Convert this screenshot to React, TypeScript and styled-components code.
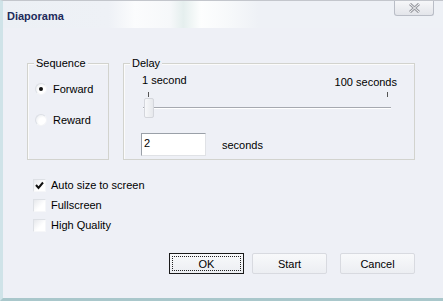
import styled, { createGlobalStyle } from "styled-components";

const GlobalStyle = createGlobalStyle`
  html, body {
    margin: 0;
    padding: 0;
    background: #eef0f6;
  }
  body {
    font-family: "Liberation Sans", Arial, sans-serif;
    font-size: 11px;
    color: #000;
  }
`;

const Window = styled.div`
  position: relative;
  width: 443px;
  height: 301px;
  box-sizing: border-box;
  background: #eef0f6;
  border-top: 1px solid #c3c6cc;
  border-left: 3px solid #cfe3e8;
  border-bottom: 3px solid #a9c7cb;
  display: flex;
  flex-direction: column;
  overflow: hidden;
`;

const TitleBar = styled.div`
  height: 27px;
  display: flex;
  align-items: flex-start;
  justify-content: space-between;
  background: linear-gradient(
    90deg,
    #ecf0f5 0%,
    #eef1f6 24%,
    #fbfcfd 30%,
    #f6f8fa 38%,
    #e5efee 41%,
    #fdfefe 45%,
    #f6f8fa 52%,
    #eef1f6 58%,
    #eef1f6 100%
  );
`;

const Title = styled.span`
  margin: 8px 0 0 4px;
  font-weight: bold;
  font-size: 11px;
  line-height: 14px;
  color: #1d2b5b;
`;

const CloseButton = styled.div`
  width: 40px;
  height: 15px;
  margin-right: 9px;
  box-sizing: border-box;
  border: 1px solid #b9bdc6;
  border-top: none;
  border-radius: 0 0 3px 3px;
  background: linear-gradient(#f6f7f9, #e3e5ea);
  display: flex;
  align-items: center;
  justify-content: center;
`;

const Body = styled.div`
  flex: 1;
  display: flex;
  flex-direction: column;
  padding: 35px 28px 0 24px;
`;

const GroupRow = styled.div`
  display: flex;
  gap: 14px;
`;

const GroupBox = styled.div<{ $width: number }>`
  width: ${({ $width }) => $width}px;
  height: 97px;
  box-sizing: border-box;
  border: 1px solid #d2d3ce;
  box-shadow: inset 1px 1px 0 #fbfbfb;
`;

const GroupLabel = styled.span`
  display: block;
  width: fit-content;
  margin: -7px 0 0 6px;
  padding: 0 2px;
  line-height: 13px;
  background: #eef0f6;
`;

const RadioList = styled.div`
  display: flex;
  flex-direction: column;
  gap: 15px;
  margin: 11px 0 0 7px;
`;

const OptionRow = styled.label`
  display: flex;
  align-items: center;
  height: 16px;
  gap: 6px;
`;

const Radio = styled.span<{ $checked?: boolean }>`
  width: 12px;
  height: 12px;
  border-radius: 50%;
  box-sizing: border-box;
  border: 1px solid #dcdfe5;
  border-right-color: #f4f5f7;
  border-bottom-color: #f4f5f7;
  background: radial-gradient(circle at 65% 65%, #ffffff 40%, #e4e7eb 100%);
  display: flex;
  align-items: center;
  justify-content: center;

  &::after {
    content: "";
    width: 4px;
    height: 4px;
    border-radius: 50%;
    background: ${({ $checked }) => ($checked ? "#111" : "transparent")};
  }
`;

const RangeLabels = styled.div`
  display: flex;
  justify-content: space-between;
  align-items: flex-start;
  margin: 4px 17px 0 18px;
  line-height: 13px;
`;

const RightLabel = styled.span`
  margin-top: 2px;
`;

const Slider = styled.div`
  position: relative;
  width: 248px;
  height: 29px;
  margin: 2px 0 0 19px;
`;

const Tick = styled.span<{ $left: number }>`
  position: absolute;
  left: ${({ $left }) => $left}px;
  top: 1px;
  width: 1px;
  height: 5px;
  background: #555;
`;

const Track = styled.span`
  position: absolute;
  left: 0;
  right: 0;
  top: 16px;
  height: 1px;
  background: #a6a9b0;
  border-bottom: 1px solid #ffffff;
`;

const Thumb = styled.span`
  position: absolute;
  left: 1px;
  top: 7px;
  width: 10px;
  height: 20px;
  box-sizing: border-box;
  border: 1px solid #d4d6dc;
  border-radius: 2px;
  background: linear-gradient(90deg, #f7f8fa, #e6e8ec);
`;

const DelayRow = styled.div`
  display: flex;
  align-items: center;
  gap: 16px;
  margin: 13px 0 0 17px;
`;

const NumberInput = styled.input`
  width: 65px;
  height: 23px;
  box-sizing: border-box;
  border: 1px solid #9aa0a8;
  border-right-color: #e0e2e6;
  border-bottom-color: #e0e2e6;
  padding: 0 2px 3px;
  font-family: "Liberation Sans", Arial, sans-serif;
  font-size: 11px;
  background: #fff;
  outline: none;
`;

const CheckList = styled.div`
  display: flex;
  flex-direction: column;
  gap: 7px;
  margin: 19px 0 0 6px;
`;

const CheckRow = styled.label`
  display: flex;
  align-items: center;
  height: 13px;
  gap: 5px;
  line-height: 13px;
`;

const CheckBox = styled.span`
  width: 13px;
  height: 13px;
  box-sizing: border-box;
  border: 1px solid #dde0e5;
  border-right-color: #f6f7f9;
  border-bottom-color: #f6f7f9;
  background: linear-gradient(135deg, #e6e8ec 0%, #ffffff 60%);
  display: flex;
  align-items: center;
  justify-content: center;
`;

const ButtonRow = styled.div`
  display: flex;
  justify-content: flex-end;
  margin-top: 21px;
`;

const Button = styled.button<{ $default?: boolean; $gap?: number }>`
  width: 75px;
  height: 21px;
  margin-right: ${({ $gap }) => $gap ?? 0}px;
  padding: 0;
  box-sizing: border-box;
  font-family: "Liberation Sans", Arial, sans-serif;
  font-size: 11px;
  color: #000;
  border: 1px solid ${({ $default }) => ($default ? "#1a1a1a" : "#d8dae0")};
  border-radius: ${({ $default }) => ($default ? "0" : "2px")};
  background: linear-gradient(#f8f9fb, #eceef2);
  display: flex;
  align-items: center;
  justify-content: center;
`;

const FocusRing = styled.span`
  width: 67px;
  height: 13px;
  border: 1px dotted #222;
  display: flex;
  align-items: center;
  justify-content: center;
`;

const CloseGlyph = () => (
  <svg width="13" height="10" viewBox="0 0 13 10">
    <path d="M2 1 L11 9 M11 1 L2 9" stroke="#9a9ca2" strokeWidth="3" fill="none" />
    <path d="M2 1 L11 9 M11 1 L2 9" stroke="#f4f5f7" strokeWidth="1" fill="none" />
  </svg>
);

const CheckMark = () => (
  <svg width="9" height="9" viewBox="0 0 9 9">
    <path d="M1 4 L3.5 7 L8 1.5" stroke="#111" strokeWidth="2" fill="none" />
  </svg>
);

const options = [
  { label: "Auto size to screen", checked: true },
  { label: "Fullscreen", checked: false },
  { label: "High Quality", checked: false },
];

export default function App() {
  return (
    <>
      <GlobalStyle />
      <Window>
        <TitleBar>
          <Title>Diaporama</Title>
          <CloseButton>
            <CloseGlyph />
          </CloseButton>
        </TitleBar>
        <Body>
          <GroupRow>
            <GroupBox $width={82}>
              <GroupLabel>Sequence</GroupLabel>
              <RadioList>
                <OptionRow>
                  <Radio $checked />
                  Forward
                </OptionRow>
                <OptionRow>
                  <Radio />
                  Reward
                </OptionRow>
              </RadioList>
            </GroupBox>
            <GroupBox $width={292}>
              <GroupLabel>Delay</GroupLabel>
              <RangeLabels>
                <span>1 second</span>
                <RightLabel>100 seconds</RightLabel>
              </RangeLabels>
              <Slider>
                <Tick $left={5} />
                <Tick $left={244} />
                <Track />
                <Thumb />
              </Slider>
              <DelayRow>
                <NumberInput defaultValue="2" />
                <span>seconds</span>
              </DelayRow>
            </GroupBox>
          </GroupRow>
          <CheckList>
            {options.map((o) => (
              <CheckRow key={o.label}>
                <CheckBox>{o.checked && <CheckMark />}</CheckBox>
                {o.label}
              </CheckRow>
            ))}
          </CheckList>
          <ButtonRow>
            <Button $default $gap={8}>
              <FocusRing>OK</FocusRing>
            </Button>
            <Button $gap={13}>Start</Button>
            <Button>Cancel</Button>
          </ButtonRow>
        </Body>
      </Window>
    </>
  );
}
